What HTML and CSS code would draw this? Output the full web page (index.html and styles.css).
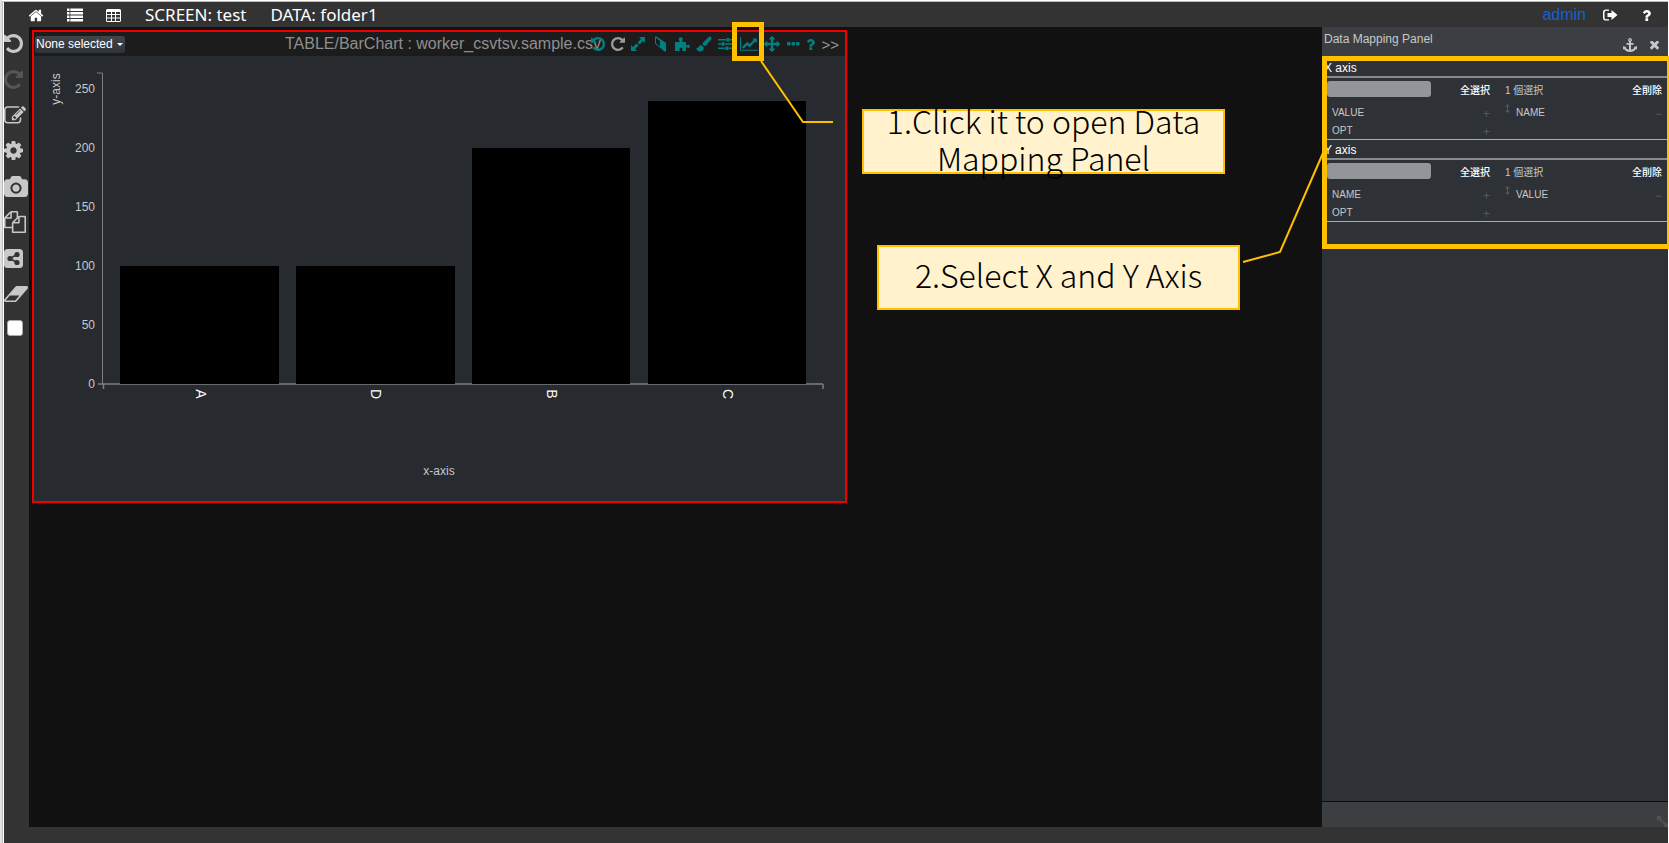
FILE: index.html
```html
<!DOCTYPE html>
<html lang="en">
<head>
<meta charset="utf-8">
<title>SCREEN: test</title>
<link rel="stylesheet" href="styles.css">
</head>
<body>
<svg class="defs" aria-hidden="true">
  <symbol id="undo" viewBox="128 128 1536 1536"><path d="M1664 896q0 156-61 298t-164 245-245 164-298 61q-172 0-327-72.5t-264-204.5q-7-10-6.5-22.5t8.5-20.5l137-138q10-9 25-9 16 2 23 12 73 95 179 147t225 52q104 0 198.5-40.5t163.5-109.5 109.5-163.5 40.5-198.5-40.5-198.5-109.5-163.5-163.5-109.5-198.5-40.5q-98 0-188 35.5t-160 101.5l137 138q31 30 14 69-17 40-59 40h-448q-26 0-45-19t-19-45v-448q0-42 40-59 39-17 69 14l130 129q107-101 244.5-156.5t284.5-55.5q156 0 298 61t245 164 164 245 61 298z"/></symbol>
  <symbol id="question" viewBox="384 256 1024 1280"><path d="M1088 1256v240q0 16-12 28t-28 12h-240q-16 0-28-12t-12-28v-240q0-16 12-28t28-12h240q16 0 28 12t12 28zm316-600q0 54-15.5 101t-35 76.5-55 59.5-57.5 43.5-61 35.5q-41 23-68.5 65t-27.5 67q0 17-12 32.5t-28 15.5h-240q-15 0-25.5-18.5t-10.5-37.5v-45q0-83 65-156.5t143-108.5q59-27 84-56t25-76q0-42-46.5-74t-107.5-32q-65 0-108 29-35 25-107 115-13 16-31 16-12 0-25-8l-164-125q-13-10-15.5-25t5.5-28q160-266 464-266 80 0 161 31t146 83 106 127.5 41 158.5z"/></symbol>
  <symbol id="expand" viewBox="0 0 14 14"><path d="M8 0h6v6l-2-2-3.500 3.500-2-2L10 2zM0 14V8l2 2 3.500-3.500 2 2L4 12l2 2z"/></symbol>
</svg>
<div class="app">
  <header class="topbar">
    <nav class="topbar-main">
      <button class="icon-btn" aria-label="Home"><svg width="15" height="15" viewBox="64 192 1664 1408"><path d="M1408 992v480q0 26-19 45t-45 19h-384v-384h-256v384h-384q-26 0-45-19t-19-45v-480q0-1 .5-3t.5-3l575-474 575 474q1 2 1 6zm223-69l-62 74q-8 9-21 11h-3q-13 0-21-7l-692-577-692 577q-12 8-24 7-13-2-21-11l-62-74q-8-10-7-23.500t11-21.500l719-599q32-26 76-26t76 26l244 204v-195q0-14 9-23t23-9h192q14 0 23 9t9 23v408l219 182q10 8 11 21.500t-7 23.500z"/></svg></button>
      <button class="icon-btn" aria-label="List"><svg width="16" height="14" viewBox="0 0 16 14"><path d="M0 .5h2.500v2.500H0zM3.300 .5H16v2.500H3.300zM0 4h2.500v2.500H0zM3.300 4H16v2.500H3.300zM0 7.500h2.500V10H0zM3.300 7.500H16V10H3.300zM0 11h2.500v2.500H0zM3.300 11H16v2.500H3.300z"/></svg></button>
      <button class="icon-btn" aria-label="Table"><svg width="15" height="13" viewBox="0 0 15 13"><path fill-rule="evenodd" d="M1.500 0h12A1.500 1.500 0 0 1 15 1.500v10a1.500 1.500 0 0 1-1.500 1.500h-12A1.500 1.500 0 0 1 0 11.500v-10A1.500 1.500 0 0 1 1.500 0zM1 3v2h4V3zm5 0v2h3V3zm4 0v2h4V3zM1 6v2.500h4V6zm5 0v2.500h3V6zm4 0v2.500h4V6zM1 9.500V12h4V9.500zm5 0V12h3V9.500zm4 0V12h4V9.500z"/></svg></button>
    </nav>
    <span class="crumb">SCREEN: test</span>
    <span class="crumb">DATA: folder1</span>
    <div class="topbar-user">
      <a class="user" href="#">admin</a>
      <button class="icon-btn" aria-label="Sign out"><svg width="15" height="12" viewBox="0 0 15 12"><path d="M6 .5v1.300H3Q1.500 1.800 1.500 3.300v5.400q0 1.500 1.500 1.500h3v1.300H3Q0 11.500 0 8.700V3.300Q0 .5 3 .5zM4.500 4h4V1L14.500 6l-6 5V8h-4z"/></svg></button>
      <button class="icon-btn help" aria-label="Help"><svg width="9" height="11"><use href="#question"/></svg></button>
    </div>
  </header>

  <div class="workspace">
    <aside class="sidebar">
      <button class="icon-btn" aria-label="Undo"><svg width="19" height="19"><use href="#undo"/></svg></button>
      <button class="icon-btn" aria-label="Redo" disabled><svg class="flip" width="19" height="19"><use href="#undo"/></svg></button>
      <button class="icon-btn" aria-label="Edit"><svg width="22" height="18" viewBox="0 128 1792 1440"><path d="M888 1184l116-116-152-152-116 116v56h96v96h56zm440-720q-16-16-33 1l-350 350q-17 17-1 33t33-1l350-350q17-17 1-33zm80 594v190q0 119-84.500 203.500t-203.500 84.500h-832q-119 0-203.500-84.500t-84.500-203.500v-832q0-119 84.500-203.500t203.500-84.500h832q63 0 117 25 15 7 18 23 3 17-9 29l-49 49q-14 14-32 8-23-6-45-6h-832q-66 0-113 47t-47 113v832q0 66 47 113t113 47h832q66 0 113-47t47-113v-126q0-13 9-22l64-64q15-15 35-7t20 29zm-96-738l288 288-672 672h-288v-288zm444 132l-92 92-288-288 92-92q28-28 68-28t68 28l152 152q28 28 28 68t-28 68z"/></svg></button>
      <button class="icon-btn" aria-label="Settings"><svg width="19" height="19" viewBox="128 128 1536 1536"><path d="M1152 896q0-106-75-181t-181-75-181 75-75 181 75 181 181 75 181-75 75-181zm512-109v222q0 12-8 23t-20 13l-185 28q-19 54-39 91 35 50 107 138 10 12 10 25t-9 23q-27 37-99 108t-94 71q-12 0-26-9l-138-108q-44 23-91 38-16 136-29 186-7 28-36 28h-222q-14 0-24.500-8.500t-11.500-21.500l-28-184q-49-16-90-37l-141 107q-10 9-25 9-14 0-25-11-126-114-165-168-7-10-7-23 0-12 8-23 15-21 51-66.500t54-70.500q-27-50-41-99l-183-27q-13-2-21-12.500t-8-23.500v-222q0-12 8-23t19-13l186-28q14-46 39-92-40-57-107-138-10-12-10-24 0-10 9-23 26-36 98.500-107.500t94.500-71.500q13 0 26 10l138 107q44-23 91-38 16-136 29-186 7-28 36-28h222q14 0 24.500 8.500t11.500 21.500l28 184q49 16 90 37l142-107q9-9 24-9 13 0 25 10 129 119 165 170 7 8 7 22 0 12-8 23-15 21-51 66.500t-54 70.500q26 50 41 98l183 28q13 2 21 12.500t8 23.500z"/></svg></button>
      <button class="icon-btn" aria-label="Camera"><svg width="24" height="21" viewBox="-64 0 1920 1664"><path d="M896 672q119 0 203.500 84.500t84.500 203.500-84.500 203.500-203.500 84.500-203.500-84.500-84.500-203.500 84.500-203.500 203.500-84.500zm704-416q106 0 181 75t75 181v896q0 106-75 181t-181 75h-1408q-106 0-181-75t-75-181v-896q0-106 75-181t181-75h224l51-136q19-49 69.500-84.500t103.500-35.500h512q53 0 103.500 35.500t69.500 84.500l51 136h224zm-704 1152q185 0 316.500-131.500t131.500-316.500-131.500-316.500-316.500-131.500-316.500 131.500-131.500 316.500 131.500 316.500 316.500 131.500z"/></svg></button>
      <button class="icon-btn" aria-label="Copy"><svg width="22" height="22" viewBox="0 0 1792 1792"><path d="M1696 384q40 0 68 28t28 68v1216q0 40-28 68t-68 28h-960q-40 0-68-28t-28-68v-288h-544q-40 0-68-28t-28-68v-672q0-40 20-88t48-76l408-408q28-28 76-48t88-20h416q40 0 68 28t28 68v328q68-40 128-40h416zm-544 213l-299 299h299v-299zm-640-384l-299 299h299v-299zm196 647l316-316v-416h-384v416q0 40-28 68t-68 28h-416v640h512v-256q0-40 20-88t48-76zm956 804v-1152h-384v416q0 40-28 68t-68 28h-416v640h896z"/></svg></button>
      <button class="icon-btn" aria-label="Share"><svg width="19" height="19" viewBox="0 0 19 19"><rect width="19" height="19" rx="3.500"/><g fill="#333" stroke="#333" stroke-width="1.600"><path d="M13 5.500L6 9.500l7 4" fill="none"/><circle cx="13" cy="5.500" r="1.800"/><circle cx="6" cy="9.500" r="1.800"/><circle cx="13" cy="13.500" r="1.800"/></g></svg></button>
      <button class="icon-btn" aria-label="Erase"><svg width="24" height="16" viewBox="-64 256 1920 1280"><path d="M832 1408l336-384h-768l-336 384h768zm1013-1077q15 34 9.500 71.500t-30.500 65.500l-896 1024q-38 44-96 44h-768q-38 0-69.500-20.500t-47.500-54.500q-15-34-9.500-71.500t30.500-65.500l896-1024q38-44 96-44h768q38 0 69.500 20.500t47.500 54.500z"/></svg></button>
      <input class="toggle" type="checkbox" aria-label="Toggle">
    </aside>

    <main class="canvas">
      <section class="window">
        <div class="window-bar">
          <button class="select-btn">None selected <span class="caret"></span></button>
          <h2 class="window-title">TABLE/BarChart : worker_csvtsv.sample.csv</h2>
          <div class="tools">
            <button class="icon-btn" aria-label="Undo"><svg width="14" height="14"><use href="#undo"/></svg></button>
            <button class="icon-btn muted" aria-label="Redo"><svg class="flip" width="14" height="14"><use href="#undo"/></svg></button>
            <button class="icon-btn" aria-label="Expand"><svg width="14" height="14"><use href="#expand"/></svg></button>
            <button class="icon-btn" aria-label="Clear"><svg width="18" height="16" viewBox="0 0 18 16"><path fill-rule="evenodd" d="M4 .5h1.500L15 7v8.500h-1.500L4 7.500zM5 1.800v5.500l4 3.200V5z"/></svg></button>
            <button class="icon-btn" aria-label="Plugins"><svg width="15" height="14" viewBox="0 0 15 14"><path d="M0 5h4.500Q5 4.500 4 3.200 3.200.5 5.700.3 8.300.5 7.500 3.200 6.600 4.500 7.200 5H11v3q.5.800 1.500 0 2-1 2.500 1.300-.500 2.300-2.500 1.300-1-.800-1.500 0V14H7.500q-.700-.500 0-1.500.5-1.800-1.500-2-2 .2-1.500 2 .7 1 0 1.500H0z"/></svg></button>
            <button class="icon-btn" aria-label="Style"><svg width="16" height="16" viewBox="0 0 16 16"><path d="M14 .5q1.700 0 1.500 1.700-.2.800-4.500 6.300Q9.600 10 8.300 10L6.500 8.300Q6.500 7 8 5.700L12.800 1q.6-.5 1.200-.5zM5.500 9.200l2.200 2q.3 4-3.700 4.300Q1 15.500 0 11.500q1.500 1 2.200 0Q3 9 5.500 9.200z"/></svg></button>
            <button class="icon-btn" aria-label="Options"><svg width="16" height="14" viewBox="0 0 16 14"><path d="M0 2h8v1.500H0zM12 2h4v1.500h-4zM8.500 1h3v3.500h-3zM0 6.300h3v1.500H0zM7 6.300h9v1.500H7zM3.500 5.300h3v3.500h-3zM0 10.600h7v1.500H0zM11 10.600h5v1.500h-5zM7.500 9.600h3v3.500h-3z"/></svg></button>
            <button class="icon-btn" aria-label="Data mapping"><svg width="18" height="14" viewBox="0 128 2048 1536"><path d="M2048 1536v128h-2048v-1536h128v1408h1920zm-128-1248v435q0 21-19.500 29.500t-35.500-7.500l-121-121-633 633q-10 10-23 10t-23-10l-233-233-416 416-192-192 585-585q10-10 23-10t23 10l233 233 464-464-121-121q-16-16-7.500-35.500t29.500-19.500h435q14 0 23 9t9 23z"/></svg></button>
            <button class="icon-btn" aria-label="Move"><svg width="16" height="16" viewBox="0 0 1792 1792"><path d="M1792 896q0 26-19 45l-256 256q-19 19-45 19t-45-19-19-45v-128h-384v384h128q26 0 45 19t19 45-19 45l-256 256q-19 19-45 19t-45-19l-256-256q-19-19-19-45t19-45 45-19h128v-384h-384v128q0 26-19 45t-45 19-45-19l-256-256q-19-19-19-45t19-45l256-256q19-19 45-19t45 19 19 45v128h384v-384h-128q-26 0-45-19t-19-45 19-45l256-256q19-19 45-19t45 19l256 256q19 19 19 45t-19 45-45 19h-128v384h384v-128q0-26 19-45t45-19 45 19l256 256q19 19 19 45z"/></svg></button>
            <button class="icon-btn" aria-label="More"><svg width="14" height="4" viewBox="0 0 14 4"><rect x="1" width="3.500" height="3.500" rx="1"/><rect x="5.500" width="3.500" height="3.500" rx="1"/><rect x="10" width="3.500" height="3.500" rx="1"/></svg></button>
            <button class="icon-btn" aria-label="Help"><svg width="9" height="11"><use href="#question"/></svg></button>
            <button class="icon-btn muted more">&gt;&gt;</button>
          </div>
        </div>
        <svg class="chart" viewBox="34 56 811 445" role="img" aria-label="Bar chart">
          <g class="axis">
            <path d="M97 73H102.500V384"/>
            <path d="M98 384H823M103.500 384V389M823 384V389" stroke-width="1.500"/>
          </g>
          <g class="bars">
            <rect x="120" y="266" width="159" height="118"/>
            <rect x="296" y="266" width="159" height="118"/>
            <rect x="472" y="148" width="158" height="236"/>
            <rect x="648" y="101" width="158" height="283"/>
          </g>
          <g class="tick" text-anchor="end">
            <text x="95" y="93">250</text>
            <text x="95" y="152">200</text>
            <text x="95" y="211">150</text>
            <text x="95" y="270">100</text>
            <text x="95" y="329">50</text>
            <text x="95" y="388">0</text>
          </g>
          <g class="category" text-anchor="middle">
            <text transform="translate(196 394) rotate(90)">A</text>
            <text transform="translate(371 394) rotate(90)">D</text>
            <text transform="translate(547 394) rotate(90)">B</text>
            <text transform="translate(723 394) rotate(90)">C</text>
          </g>
          <g class="tick" text-anchor="middle">
            <text transform="translate(60 89) rotate(-90)">y-axis</text>
            <text x="439" y="475">x-axis</text>
          </g>
        </svg>
      </section>
    </main>

    <aside class="panel">
      <header class="panel-head">
        <h2 class="panel-title">Data Mapping Panel</h2>
        <div class="panel-actions">
          <button class="icon-btn" aria-label="Dock"><svg width="14" height="14" viewBox="0 0 14 14"><path fill-rule="evenodd" d="M7 0a2 2 0 0 1 1 3.700V5h2.500v1.700H8v5q2.500-.300 3.500-2L10.500 9 14 8.300v3.500l-1-1Q11 14 7 14t-6-3.200l-1 1V8.300L3.500 9l-1 .7q1 1.700 3.500 2v-5H3.500V5H6V3.700A2 2 0 0 1 7 0zm0 1.300a.7.7 0 1 0 0 1.400.7.7 0 0 0 0-1.400z"/></svg></button>
          <button class="icon-btn" aria-label="Close"><svg width="9" height="9" viewBox="302 434 1188 1188"><path d="M1490 1322q0 40-28 68l-136 136q-28 28-68 28t-68-28l-294-294-294 294q-28 28-68 28t-68-28l-136-136q-28-28-28-68t28-68l294-294-294-294q-28-28-28-68t28-68l136-136q28-28 68-28t68 28l294 294 294-294q28-28 68-28t68 28l136 136q28 28 28 68t-28 68l-294 294 294 294q28 28 28 68z"/></svg></button>
        </div>
      </header>
      <div class="panel-body">
        <section class="mapping">
          <h3 class="mapping-title">X axis</h3>
          <div class="picker">
            <div class="picker-col">
              <div class="picker-head"><input class="search" type="text" aria-label="Filter X axis fields"><a href="#">全選択</a></div>
              <ul class="fields">
                <li><span>VALUE</span><button class="mark" aria-label="Add VALUE">+</button></li>
                <li><span>OPT</span><button class="mark" aria-label="Add OPT">+</button></li>
              </ul>
            </div>
            <div class="picker-col chosen">
              <div class="picker-head"><span>1 個選択</span><a href="#">全削除</a></div>
              <ul class="fields">
                <li><svg class="grip" width="5" height="9" viewBox="0 0 5 9" aria-hidden="true"><path d="M2.500 0L5 2.500H3v4h2L2.500 9 0 6.500h2v-4H0z"/></svg><span>NAME</span><button class="mark" aria-label="Remove NAME">−</button></li>
              </ul>
            </div>
          </div>
        </section>
        <section class="mapping">
          <h3 class="mapping-title">Y axis</h3>
          <div class="picker">
            <div class="picker-col">
              <div class="picker-head"><input class="search" type="text" aria-label="Filter Y axis fields"><a href="#">全選択</a></div>
              <ul class="fields">
                <li><span>NAME</span><button class="mark" aria-label="Add NAME">+</button></li>
                <li><span>OPT</span><button class="mark" aria-label="Add OPT">+</button></li>
              </ul>
            </div>
            <div class="picker-col chosen">
              <div class="picker-head"><span>1 個選択</span><a href="#">全削除</a></div>
              <ul class="fields">
                <li><svg class="grip" width="5" height="9" viewBox="0 0 5 9" aria-hidden="true"><path d="M2.500 0L5 2.500H3v4h2L2.500 9 0 6.500h2v-4H0z"/></svg><span>VALUE</span><button class="mark" aria-label="Remove VALUE">−</button></li>
              </ul>
            </div>
          </div>
        </section>
      </div>
      <footer class="panel-foot"><svg class="resize" width="11" height="11" viewBox="0 0 14 14"><use href="#expand" transform="matrix(-1 0 0 1 14 0)" width="14" height="14"/></svg></footer>
      <div class="panel-highlight"></div>
    </aside>
  </div>
</div>

<svg class="leaders" aria-hidden="true">
  <polyline points="761,61 803,122 833,122"/>
  <polyline points="1243,262 1280,252 1323,153"/>
</svg>
<div class="tool-highlight"></div>
<p class="callout callout-open">1.Click it to open Data Mapping Panel</p>
<p class="callout callout-select">2.Select X and Y Axis</p>
</body>
</html>
```
FILE: styles.css
```css
* { box-sizing: border-box; }

body {
  margin: 0;
  min-height: 100vh;
  display: flex;
  position: relative;
  overflow: hidden;
  background: #fff;
  border-left: 2px solid #dfe2e4;
  font-family: "Liberation Sans", "Noto Sans CJK JP", sans-serif;
  font-size: 12px;
  color: #c8c8c8;
}

h2, h3, p, ul { margin: 0; padding: 0; font-weight: normal; }
ul { list-style: none; }
a { color: inherit; text-decoration: none; }
svg { display: block; fill: currentColor; }

.defs { position: absolute; width: 0; height: 0; }

.icon-btn {
  display: flex;
  align-items: center;
  padding: 0;
  border: 0;
  background: none;
  color: inherit;
  font: inherit;
}
.icon-btn:disabled { color: #555; }
.flip { transform: scaleX(-1); }

.app {
  flex: 1;
  display: flex;
  flex-direction: column;
  margin: 1px 1px 0 0;
  padding-bottom: 16px;
  background: #333;
  border-top: 1px solid #bbb;
  border-left: 1px solid #bbb;
  box-shadow: inset 1px 0 #fff;
}

/* Top bar */
.topbar {
  display: flex;
  align-items: center;
  height: 25px;
  padding: 1px 17px 0 26px;
  color: #fff;
}
.topbar-main { display: flex; align-items: center; gap: 23px; }
.crumb {
  margin-left: 24px;
  font-family: "Noto Sans", sans-serif;
  font-size: 17px;
  line-height: 24px;
}
.topbar-user { display: flex; align-items: center; gap: 17px; margin-left: auto; }
.user { color: #1461cf; font-size: 16px; }
.help { margin-left: 7px; }

/* Workspace */
.workspace { flex: 1; display: flex; }

.sidebar {
  width: 26px;
  height: 309px;
  padding: 7px 0 0 1px;
  display: flex;
  flex-direction: column;
  justify-content: space-between;
  overflow: hidden;
}
.sidebar .icon-btn { height: 19px; }
.sidebar svg { flex: none; }
.toggle {
  appearance: none;
  width: 16px;
  height: 16px;
  margin: 0 0 0 3px;
  flex: none;
  border: 1px solid #aaa;
  border-radius: 3px;
  background: #fff;
}

.canvas { flex: 1; position: relative; background: #111; }

/* Chart window */
.window {
  position: absolute;
  left: 3px;
  top: 3px;
  width: 815px;
  border: 2px solid #f00000;
  background: #272a2e;
}
.window-bar {
  display: flex;
  align-items: center;
  height: 24px;
  padding: 0 6px 0 1px;
  background: #1c1c1c;
}
.select-btn {
  display: flex;
  align-items: center;
  gap: 4px;
  width: 90px;
  height: 17px;
  padding: 0 1px;
  border: 0;
  border-radius: 3px;
  background: linear-gradient(#41464b, #2e3338);
  color: #fff;
  font: 12px/16px "Liberation Sans", sans-serif;
  white-space: nowrap;
}
.caret {
  border: 3px solid transparent;
  border-top-color: #fff;
  border-bottom: 0;
}
.window-title {
  flex: 1;
  min-width: 0;
  padding-left: 160px;
  color: #8f8f8f;
  font-size: 16px;
  line-height: 20px;
  white-space: nowrap;
}
.tools { display: flex; align-items: center; gap: 6px; color: #008080; }
.muted { color: #999; }
.more { font-size: 15px; }

.chart { width: 100%; }
.axis { fill: none; stroke: #7d7f82; }
.bars { fill: #000; }
.tick { fill: #c8c8c8; font-size: 12px; }
.category { fill: #fff; font-size: 14px; }

/* Data mapping panel */
.panel {
  position: relative;
  display: flex;
  flex-direction: column;
  width: 346px;
  background: #2e3236;
}
.panel-head {
  display: flex;
  justify-content: space-between;
  height: 29px;
  padding: 4px 9px 0 2px;
  background: #3b3f43;
}
.panel-title { font-size: 12px; line-height: 16px; }
.panel-actions { display: flex; align-items: center; gap: 13px; padding-top: 3px; }
.panel-body { flex: 1; padding-top: 2px; }
.mapping { border-bottom: 1px solid #aaa; }
.mapping-title {
  height: 20px;
  padding-left: 2px;
  border-bottom: 2px solid #888b8e;
  color: #fff;
  font-size: 12px;
  line-height: 20px;
}
.picker {
  display: grid;
  grid-template-columns: 163fr 157fr;
  gap: 15px;
  height: 61px;
  padding: 3px 6px 0 5px;
}
.picker-head {
  display: flex;
  align-items: center;
  justify-content: space-between;
  height: 16px;
  margin-bottom: 6px;
  font-size: 10px;
}
.picker-head a { color: #fff; font-weight: 500; }
.search {
  width: 104px;
  height: 16px;
  padding: 0 4px;
  border: 0;
  border-radius: 3px;
  background: #939699;
}
.fields li {
  display: flex;
  align-items: center;
  height: 18px;
  padding-left: 5px;
  font-size: 10px;
}
.chosen .fields li { padding-left: 0; }
.grip { margin: 0 6px 8px 0; color: #55585b; }
.mark {
  margin-left: auto;
  padding: 4px 0 0;
  border: 0;
  background: none;
  color: #55585b;
  font: 12px/12px "Liberation Sans", sans-serif;
}
.panel-foot {
  display: flex;
  justify-content: flex-end;
  align-items: flex-end;
  height: 26px;
  border-top: 1px solid #0c0d0e;
  background: #3b3f42;
}
.resize { color: #505457; }

/* Guide annotations */
.panel-highlight {
  position: absolute;
  inset: 29px -1px auto 0;
  height: 193px;
  border: 5px solid #ffc000;
  border-right-width: 2px;
}
.tool-highlight {
  position: absolute;
  left: 730px;
  top: 22px;
  width: 32px;
  height: 39px;
  border: 5px solid #ffc000;
}
.leaders {
  position: absolute;
  left: -2px;
  top: 0;
  width: 100%;
  height: 100%;
  fill: none;
  stroke: #ffc000;
  stroke-width: 2;
  pointer-events: none;
}
.callout {
  position: absolute;
  display: flex;
  align-items: center;
  justify-content: center;
  width: 363px;
  height: 65px;
  padding: 0 8px 6px;
  border: 2px solid #ffc000;
  background: #fff2cc;
  color: #000;
  font: 300 32px/37px "Noto Sans CJK JP", sans-serif;
  text-align: center;
}
.callout-open { left: 860px; top: 109px; }
.callout-select { left: 875px; top: 245px; }
```
